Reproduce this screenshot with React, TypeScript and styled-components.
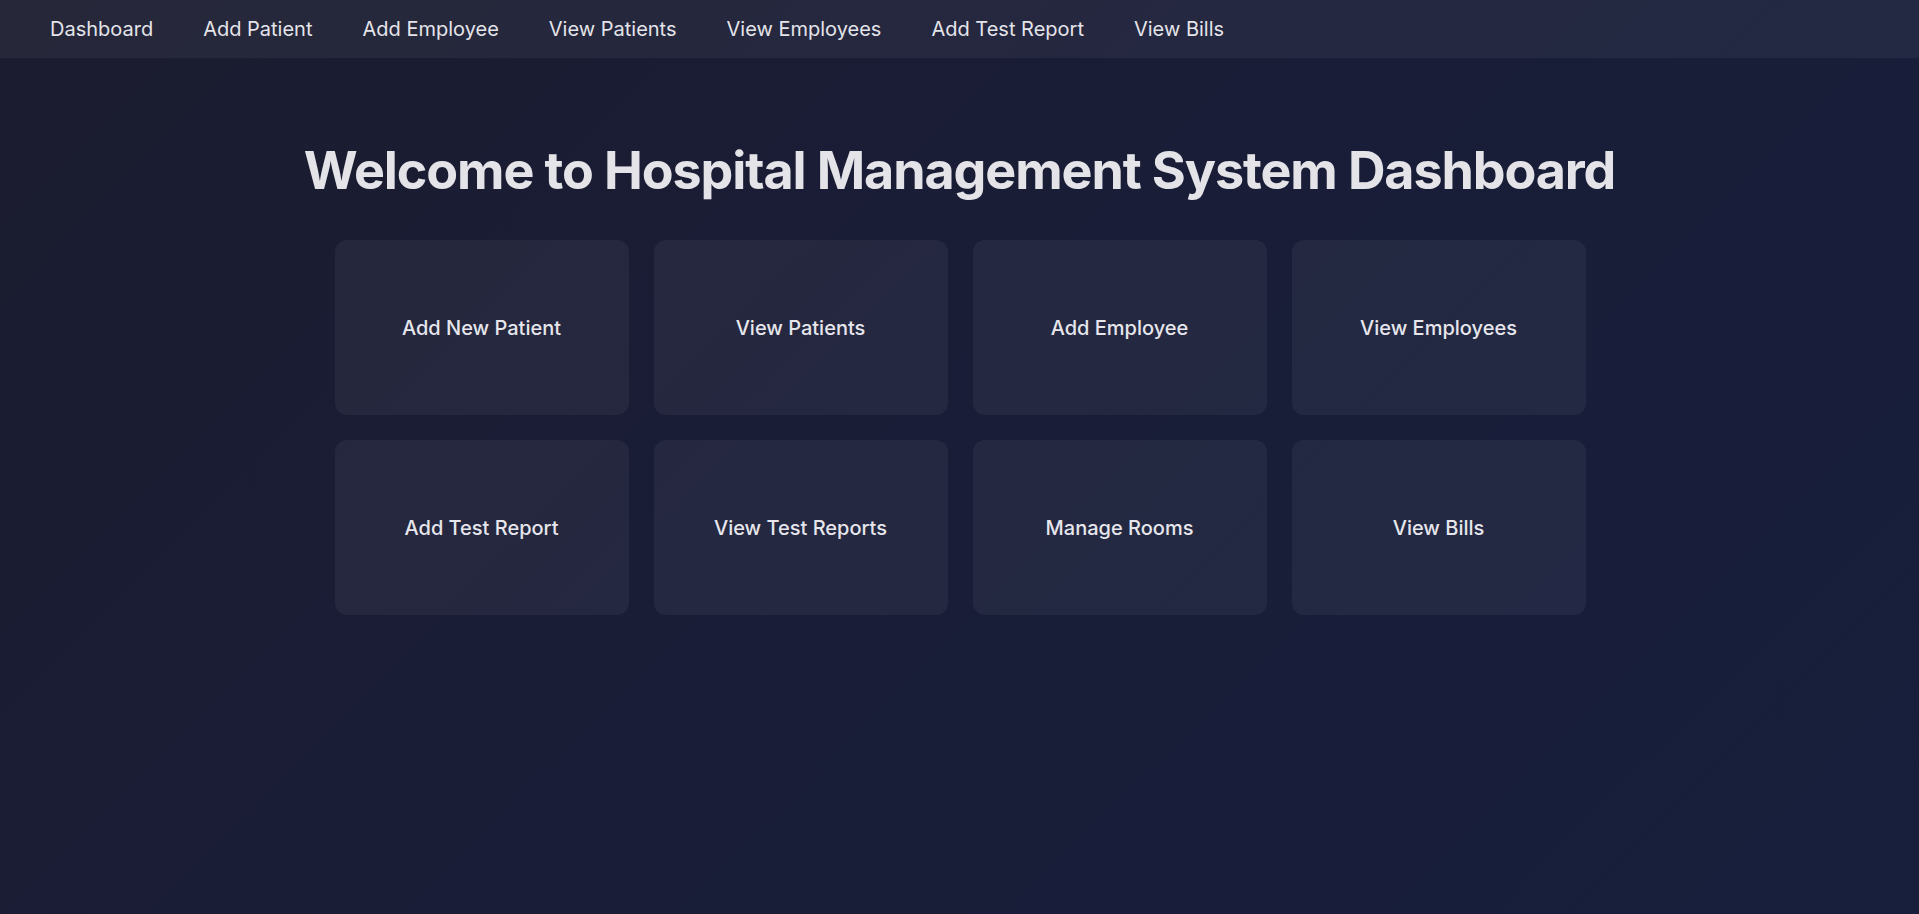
import styled, { createGlobalStyle } from 'styled-components'

const GlobalStyle = createGlobalStyle`
    * {
        box-sizing: border-box;
    }

    html, body {
        margin: 0;
        padding: 0;
    }

    body {
        font-family: Inter, 'Noto Sans', sans-serif;
        color: #e2e2e6;
        background: #1a1c30;
    }
`

const Page = styled.div`
    min-height: 100vh;
    background: linear-gradient(135deg, #1b1c2f 0%, #191d37 50%, #171f3c 100%);
`

const NavBar = styled.nav`
    display: flex;
    align-items: center;
    gap: 50px;
    height: 58px;
    padding: 0 50px;
    background: rgba(255, 255, 255, 0.05);
`

const NavLink = styled.a`
    font-size: 20px;
    font-weight: 400;
    color: #e4e4ea;
    text-decoration: none;
    cursor: pointer;
`

const Main = styled.main`
    display: flex;
    flex-direction: column;
    align-items: center;
    padding-top: 82px;
`

const Title = styled.h1`
    margin: 0 0 38px;
    font-size: 52px;
    font-weight: 700;
    line-height: 1.2;
    letter-spacing: -1.1px;
    color: #e4e4e8;
`

const CardGrid = styled.div`
    display: grid;
    grid-template-columns: repeat(4, 294px);
    grid-auto-rows: 175px;
    gap: 25px;
    margin-left: 1px;
`

const Card = styled.div`
    display: flex;
    align-items: center;
    justify-content: center;
    border-radius: 12px;
    background: rgba(255, 255, 255, 0.05);
    font-size: 20px;
    font-weight: 500;
    color: #e6e6ec;
    cursor: pointer;
`

const navItems = [
    'Dashboard',
    'Add Patient',
    'Add Employee',
    'View Patients',
    'View Employees',
    'Add Test Report',
    'View Bills',
]

const cards = [
    'Add New Patient',
    'View Patients',
    'Add Employee',
    'View Employees',
    'Add Test Report',
    'View Test Reports',
    'Manage Rooms',
    'View Bills',
]

function App() {
    return (
        <Page>
            <GlobalStyle />
            <NavBar>
                {navItems.map(item => (
                    <NavLink key={item}>{item}</NavLink>
                ))}
            </NavBar>

            <Main>
                <Title>Welcome to Hospital Management System Dashboard</Title>

                <CardGrid>
                    {cards.map(card => (
                        <Card key={card}>{card}</Card>
                    ))}
                </CardGrid>
            </Main>
        </Page>
    )
}

export default App
